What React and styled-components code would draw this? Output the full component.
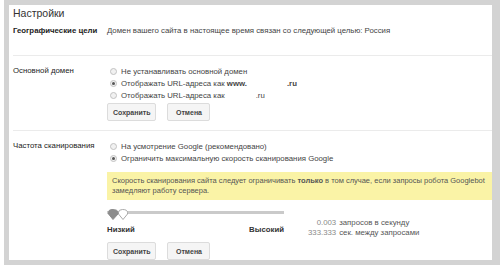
import React from "react";
import styled, { createGlobalStyle, css } from "styled-components";

const Global = createGlobalStyle`
  html, body { margin: 0; padding: 0; background: #fff; }
  body { font-family: "Liberation Sans", Arial, sans-serif; }
`;

const Frame = styled.div`
  margin-left: 4px;
  width: 496px;
  box-sizing: border-box;
  border-style: solid;
  border-color: #d3d3d3;
  border-width: 5px 8px 5px 5px;
  background: #fff;
  height: 265px;
  overflow: hidden;
`;

const Title = styled.div`
  padding: 1px 0 0 4px;
  font-size: 10.5px;
  line-height: 14px;
  color: #333;
`;

const Section = styled.div`
  display: grid;
  grid-template-columns: 94px 1fr;
  margin-left: 4px;
  padding: ${(p) => p.$pad};
  border-bottom: ${(p) => (p.$last ? "none" : "1px solid #ebebeb")};
`;

const Label = styled.div`
  font-size: 7.8px;
  line-height: ${(p) => p.$lh || "12px"};
  font-weight: ${(p) => (p.$bold ? 700 : 400)};
  color: #222;
  white-space: nowrap;
`;

const Value = styled.div`
  font-size: 7.8px;
  line-height: 10px;
  color: #444;
  white-space: nowrap;
`;

const Options = styled.div`
  display: flex;
  flex-direction: column;
`;

const Option = styled.div`
  display: flex;
  align-items: center;
  gap: 4px;
  height: 12px;
  padding-left: 3px;
  font-size: 7.8px;
  color: #444;
  white-space: nowrap;
`;

const Radio = styled.span`
  position: relative;
  flex: none;
  width: 7px;
  height: 7px;
  box-sizing: border-box;
  border-radius: 50%;
  border: 1px solid #c2c2c2;
  background: #f1f1f1;
  ${(p) =>
    p.$checked &&
    css`
      &::after {
        content: "";
        position: absolute;
        left: 1px;
        top: 1px;
        width: 3px;
        height: 3px;
        border-radius: 50%;
        background: #555;
      }
    `}
`;

const Blank = styled.span`
  display: inline-block;
  width: ${(p) => p.$w}px;
`;

const Buttons = styled.div`
  display: flex;
  gap: 11px;
  margin-top: ${(p) => p.$mt || 0}px;
`;

const Button = styled.button`
  height: 18px;
  min-width: 43px;
  padding: 0 5px;
  box-sizing: border-box;
  border: 1px solid #dcdcdc;
  border-radius: 2px;
  background: #f5f5f5;
  font-family: inherit;
  font-size: 7px;
  font-weight: 700;
  color: #444;
  cursor: pointer;
`;

const Notice = styled.div`
  margin-top: 8px;
  padding: 4px 5px;
  background: #faf3a6;
  font-size: 7.5px;
  line-height: 10px;
  color: #555;
  white-space: nowrap;
  overflow: hidden;
`;

const SpeedRow = styled.div`
  display: flex;
  align-items: flex-start;
  margin-top: 9px;
`;

const SliderCol = styled.div`
  width: 177px;
`;

const Track = styled.div`
  position: relative;
  height: 11px;
  &::before {
    content: "";
    position: absolute;
    left: 0;
    right: 0;
    top: 2px;
    height: 3px;
    background: #cacaca;
  }
`;

const Thumbs = styled.svg`
  position: absolute;
  left: 1px;
  top: 0;
`;

const Ends = styled.div`
  display: flex;
  justify-content: space-between;
  margin-top: 5px;
  font-size: 7.8px;
  line-height: 10px;
  font-weight: 700;
  color: #333;
`;

const Rates = styled.div`
  display: grid;
  grid-template-columns: auto auto;
  column-gap: 3px;
  margin: 9px 0 0 24px;
  font-size: 7.8px;
  line-height: 10px;
  color: #555;
  white-space: nowrap;
`;

const Num = styled.span`
  text-align: right;
  color: #8a8a8a;
`;

export default function App() {
  return (
    <>
      <Global />
      <Frame>
        <Title>Настройки</Title>

        <Section $pad="6px 0 19px">
          <Label $bold $lh="10px">Географические цели</Label>
          <Value>Домен вашего сайта в настоящее время связан со следующей целью: Россия</Value>
        </Section>

        <Section $pad="9px 0 9px">
          <Label>Основной домен</Label>
          <div>
            <Options>
              <Option>
                <Radio />
                Не устанавливать основной домен
              </Option>
              <Option>
                <Radio $checked />
                <span>
                  Отображать URL-адреса как <b>www.</b>
                  <Blank $w={40} />
                  <b>.ru</b>
                </span>
              </Option>
              <Option>
                <Radio />
                <span>
                  Отображать URL-адреса как
                  <Blank $w={31} />
                  .ru
                </span>
              </Option>
            </Options>
            <Buttons $mt={2}>
              <Button>Сохранить</Button>
              <Button>Отмена</Button>
            </Buttons>
          </div>
        </Section>

        <Section $pad="9px 0 2px" $last>
          <Label>Частота сканирования</Label>
          <div>
            <Options>
              <Option>
                <Radio />
                На усмотрение Google (рекомендовано)
              </Option>
              <Option>
                <Radio $checked />
                Ограничить максимальную скорость сканирования Google
              </Option>
            </Options>
            <Notice>
              Скорость сканирования сайта следует ограничивать <b>только</b> в том случае, если запросы робота Googlebot
              <br />
              замедляют работу сервера.
            </Notice>
            <SpeedRow>
              <SliderCol>
                <Track>
                  <Thumbs width="21" height="11" viewBox="0 0 21 11">
                    <path d="M10.5 3.5 Q10.5 0.5 14.5 0.5 Q19.5 0.5 19.5 3.5 V5 L15 10.5 L10.5 5 Z" fill="#fff" stroke="#a9a9a9" />
                    <path d="M0.5 3.5 Q0.5 0.5 4 0.5 Q10 0.5 10 3.5 V5 L5 10.5 L0.5 5 Z" fill="#8c8c8c" stroke="#8c8c8c" />
                  </Thumbs>
                </Track>
                <Ends>
                  <span>Низкий</span>
                  <span>Высокий</span>
                </Ends>
              </SliderCol>
              <Rates>
                <Num>0.003</Num>
                <span>запросов в секунду</span>
                <Num>333.333</Num>
                <span>сек. между запросами</span>
              </Rates>
            </SpeedRow>
            <Buttons $mt={4}>
              <Button>Сохранить</Button>
              <Button>Отмена</Button>
            </Buttons>
          </div>
        </Section>
      </Frame>
    </>
  );
}
